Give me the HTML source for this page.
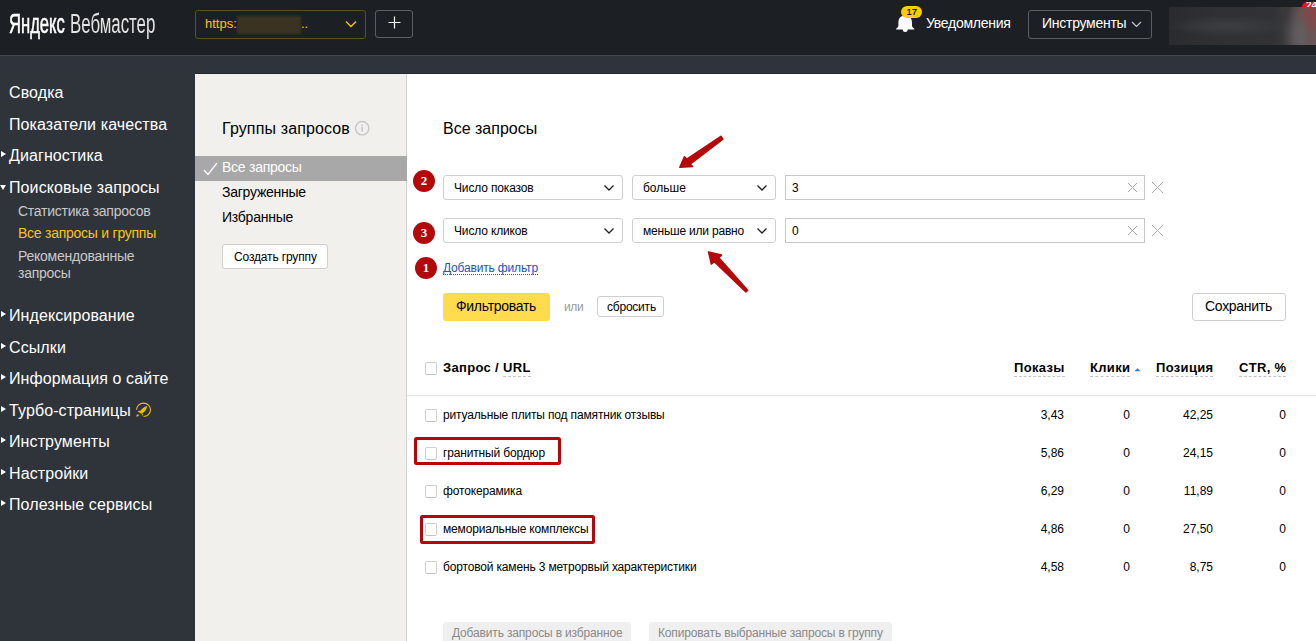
<!DOCTYPE html>
<html><head><meta charset="utf-8">
<style>
*{margin:0;padding:0;box-sizing:border-box}
html,body{width:1316px;height:641px;overflow:hidden;background:#2f333a;font-family:"Liberation Sans",sans-serif}
.a{position:absolute;white-space:nowrap;line-height:1}
#hdr{position:absolute;left:0;top:0;width:1316px;height:55px;background:#1c1f23}
#hline{position:absolute;left:0;top:55px;width:1316px;height:1px;background:#41454b}
#strip{position:absolute;left:0;top:56px;width:1316px;height:17px;background:#2f333b}
#sline{position:absolute;left:195px;top:73px;width:1121px;height:1px;background:#24272c}
#gpanel{position:absolute;left:195px;top:74px;width:211px;height:567px;background:#f1f0ed}
#gborder{position:absolute;left:406px;top:74px;width:1px;height:567px;background:#cfcfcf}
#main{position:absolute;left:407px;top:74px;width:909px;height:567px;background:#fff}
.nav{font-size:16px;color:#fff;letter-spacing:0.1px}
.sub{font-size:14px;color:#c9c9c9;letter-spacing:-0.25px}
.tri{position:absolute;width:0;height:0;border-top:3px solid transparent;border-bottom:3px solid transparent;border-left:5px solid #fff}
.trid{position:absolute;width:0;height:0;border-left:3px solid transparent;border-right:3px solid transparent;border-top:5px solid #fff}
.sel{position:absolute;height:25px;border:1px solid #d0d0d0;border-radius:3px;background:#fff}
.inp{position:absolute;height:25px;border:1px solid #c8c8c8;background:#fff}
.t13{font-size:12px;color:#000}
.t12{font-size:12px;color:#000;letter-spacing:-0.16px}
.badge{position:absolute;width:22px;height:22px;border-radius:50%;background:#b3090b;color:#fff;font-weight:bold;font-size:13px;text-align:center;line-height:22px;font-family:"Liberation Serif",serif}
.cb{position:absolute;width:12px;height:13px;border:1px solid #cfcfcf;border-bottom-color:#c2c2c2;border-radius:2px;background:#fff}
.num{position:absolute;font-size:12px;color:#000;line-height:1;text-align:right;white-space:nowrap}
.th{position:absolute;font-size:13px;font-weight:bold;color:#000;line-height:1;white-space:nowrap;letter-spacing:0.33px}
.dash{border-bottom:1px dashed #c4c4c4;padding-bottom:1px}
</style></head><body>
<div id="hdr"></div>
<div id="hline"></div>
<div id="strip"></div>
<div id="sline"></div>
<div id="gpanel"></div>
<div id="gborder"></div>
<div id="main"></div>

<!-- header -->
<div class="a" style="left:9px;top:11px;font-size:27px;color:#fff;-webkit-text-stroke:0.6px #fff;transform:scaleX(0.615);transform-origin:0 0">Яндекс</div>
<div class="a" style="left:70px;top:11px;font-size:27px;color:#e4e4e4;transform:scaleX(0.624);transform-origin:0 0">Вебмастер</div>
<div style="position:absolute;left:195px;top:10px;width:171px;height:29px;border:1px solid #5e5020;border-radius:3px"></div>
<div class="a" style="left:205px;top:17px;font-size:13px;color:#f6c800">https:</div>
<div style="position:absolute;left:237px;top:16px;width:64px;height:18px;background:#3a3322;filter:blur(1px)"></div>
<div class="a" style="left:301px;top:17px;font-size:13px;color:#f6c800">..</div>
<svg style="position:absolute;left:345px;top:20px" width="12" height="8"><path d="M1 1.5 L6 6.5 L11 1.5" stroke="#f6c800" stroke-width="1.4" fill="none"/></svg>
<div style="position:absolute;left:375px;top:10px;width:38px;height:28px;border:1px solid #5a5d62;border-radius:3px"></div>
<svg style="position:absolute;left:388px;top:16px" width="13" height="13"><path d="M6.5 0.5V12.5M0.5 6.5H12.5" stroke="#fff" stroke-width="1.2"/></svg>

<svg style="position:absolute;left:895px;top:13px" width="20" height="20" viewBox="0 0 20 20"><path d="M10.2 2.6 C5.5 2.6 3.4 5.5 3.4 10 L3.4 12.6 C3.4 14 2.4 14.9 1.2 15.6 L1.2 16.6 L19.2 16.6 L19.2 15.6 C18 14.9 17 14 17 12.6 L17 10 C17 5.5 14.9 2.6 10.2 2.6Z M7.6 16.4 L8.3 18.6 Q10.2 19.4 12.1 18.6 L12.8 16.4Z" fill="#fff"/></svg>
<div style="position:absolute;left:901px;top:6px;width:21px;height:12px;border-radius:6px;background:#fc0"></div><div class="a" style="left:906.5px;top:7px;font-size:9.5px;-webkit-text-stroke:0.2px #000;color:#000">17</div>
<div class="a" style="left:926px;top:16px;font-size:14px;letter-spacing:-0.27px;color:#fff">Уведомления</div>
<div style="position:absolute;left:1028px;top:10px;width:124px;height:29px;border:1px solid #5a5d62;border-radius:3px"></div>
<div class="a" style="left:1042px;top:16px;font-size:14px;letter-spacing:-0.27px;color:#fff">Инструменты</div>
<svg style="position:absolute;left:1131px;top:20.5px" width="11" height="7"><path d="M1 1 L5.5 5.5 L10 1" stroke="#ccc" stroke-width="1.1" fill="none"/></svg>
<div style="position:absolute;left:1169px;top:7px;width:147px;height:38px;background:radial-gradient(ellipse 22px 24px at 147px 4px,rgba(150,62,64,0.85),rgba(150,62,64,0)),radial-gradient(ellipse 14px 30px at 127px 28px,rgba(110,108,110,0.55),rgba(110,108,110,0)),radial-gradient(ellipse 62px 11px at 58px 19px,rgba(62,64,67,0.9),rgba(62,64,67,0)),linear-gradient(90deg,#2a2b2e 0%,#2e3033 30%,#303235 70%,#3e3b3e 82%,#5e5658 90%,#6a5456 100%)"></div>
<div style="position:absolute;left:1302px;top:2px;width:20px;height:5px;border-radius:5px 5px 0 0;background:#ee1111;overflow:hidden"><div style="position:absolute;left:4px;top:-1px;font-size:10px;font-weight:bold;color:#fff;line-height:10px;font-family:'Liberation Sans'">24</div></div>

<!-- sidebar -->
<div class="a nav" style="left:9px;top:85px">Сводка</div>
<div class="a nav" style="left:9px;top:117px">Показатели качества</div>
<div class="tri" style="left:1px;top:151px"></div>
<div class="a nav" style="left:9px;top:148px">Диагностика</div>
<div class="trid" style="left:0px;top:185px"></div>
<div class="a nav" style="left:9px;top:180px">Поисковые запросы</div>
<div class="a sub" style="left:18px;top:204px">Статистика запросов</div>
<div class="a sub" style="left:18px;top:226px;color:#f5c518">Все запросы и группы</div>
<div class="a sub" style="left:18px;top:249px">Рекомендованные</div>
<div class="a sub" style="left:18px;top:266px">запросы</div>
<div class="tri" style="left:1px;top:311px"></div>
<div class="a nav" style="left:9px;top:308px">Индексирование</div>
<div class="tri" style="left:1px;top:343px"></div>
<div class="a nav" style="left:9px;top:340px">Ссылки</div>
<div class="tri" style="left:1px;top:374px"></div>
<div class="a nav" style="left:9px;top:371px">Информация о сайте</div>
<div class="tri" style="left:1px;top:406px"></div>
<div class="a nav" style="left:9px;top:403px">Турбо-страницы</div>
<svg style="position:absolute;left:132px;top:400px" width="23" height="20" viewBox="0 0 23 20"><path d="M4.5 9.8 A7 6.7 0 1 1 11.5 16.5" stroke="#e8c000" stroke-width="1.1" fill="none"/><path d="M15.2 6 C12 6.6 9.2 9 7.6 12.3 L9.2 13.9 C12.5 12.4 14.8 9.4 15.2 6Z M8.6 10.4 L5.6 11.2 L7.3 12.7Z M10.4 13.3 L9.6 16.2 L11.3 14.6Z M4.2 16.6 C4.2 15.2 5 14.4 6.2 14.2 L7 15.2 C6.6 16.2 5.6 16.7 4.2 16.6Z" fill="#e8c000"/></svg>
<div class="tri" style="left:1px;top:437px"></div>
<div class="a nav" style="left:9px;top:434px">Инструменты</div>
<div class="tri" style="left:1px;top:469px"></div>
<div class="a nav" style="left:9px;top:466px">Настройки</div>
<div class="tri" style="left:1px;top:500px"></div>
<div class="a nav" style="left:9px;top:497px">Полезные сервисы</div>

<!-- grey panel -->
<div class="a" style="left:222px;top:121px;font-size:16px;letter-spacing:0.13px;color:#000">Группы запросов</div>
<svg style="position:absolute;left:354px;top:120px" width="17" height="17" viewBox="0 0 17 17"><circle cx="8.2" cy="8.2" r="6.7" stroke="#c6c6c6" stroke-width="1.4" fill="none"/><rect x="7.4" y="7" width="1.6" height="4.6" fill="#c6c6c6"/><rect x="7.4" y="4.6" width="1.6" height="1.5" fill="#c6c6c6"/></svg>
<div style="position:absolute;left:195px;top:156px;width:212px;height:25px;background:#a8a8a8"></div>
<svg style="position:absolute;left:203px;top:162px" width="15" height="14"><path d="M1 8 L5 12.5 L14 1" stroke="#fff" stroke-width="1.3" fill="none"/></svg>
<div class="a" style="left:222px;top:160px;font-size:14px;letter-spacing:-0.25px;color:#fff">Все запросы</div>
<div class="a" style="left:222px;top:185px;font-size:14px;letter-spacing:-0.25px;color:#000">Загруженные</div>
<div class="a" style="left:222px;top:210px;font-size:14px;letter-spacing:-0.25px;color:#000">Избранные</div>
<div style="position:absolute;left:222px;top:244px;width:106px;height:25px;border:1px solid #cfcfcf;border-radius:3px;background:#fff"></div>
<div class="a" style="left:234px;top:251px;font-size:12px;letter-spacing:-0.15px;color:#000">Создать группу</div>

<!-- main -->
<div class="a" style="left:443px;top:121px;font-size:16px;color:#000">Все запросы</div>

<div class="badge" style="left:413px;top:170px">2</div>
<div class="sel" style="left:443px;top:175px;width:180px"></div>
<div class="a t13" style="left:454px;top:182px;letter-spacing:-0.15px">Число показов</div>
<svg style="position:absolute;left:603px;top:184px" width="12" height="8"><path d="M1.5 1.5 L6 6 L10.5 1.5" stroke="#222" stroke-width="1.3" fill="none"/></svg>
<div class="sel" style="left:632px;top:175px;width:144px"></div>
<div class="a t13" style="left:643px;top:182px">больше</div>
<svg style="position:absolute;left:756px;top:184px" width="12" height="8"><path d="M1.5 1.5 L6 6 L10.5 1.5" stroke="#222" stroke-width="1.3" fill="none"/></svg>
<div class="inp" style="left:785px;top:175px;width:360px"></div>
<div class="a t13" style="left:792px;top:182px">3</div>
<svg style="position:absolute;left:1127px;top:182px" width="11" height="11"><path d="M1 1L10 10M10 1L1 10" stroke="#a8a8a8" stroke-width="1"/></svg>
<svg style="position:absolute;left:1151px;top:181px" width="13" height="13"><path d="M1 1L12 12M12 1L1 12" stroke="#b0b0b0" stroke-width="1"/></svg>

<div class="badge" style="left:413px;top:222px">3</div>
<div class="sel" style="left:443px;top:218px;width:180px"></div>
<div class="a t13" style="left:454px;top:225px;letter-spacing:-0.15px">Число кликов</div>
<svg style="position:absolute;left:603px;top:227px" width="12" height="8"><path d="M1.5 1.5 L6 6 L10.5 1.5" stroke="#222" stroke-width="1.3" fill="none"/></svg>
<div class="sel" style="left:632px;top:218px;width:144px"></div>
<div class="a t13" style="left:643px;top:225px;letter-spacing:-0.2px">меньше или равно</div>
<svg style="position:absolute;left:756px;top:227px" width="12" height="8"><path d="M1.5 1.5 L6 6 L10.5 1.5" stroke="#222" stroke-width="1.3" fill="none"/></svg>
<div class="inp" style="left:785px;top:218px;width:360px"></div>
<div class="a t13" style="left:792px;top:225px">0</div>
<svg style="position:absolute;left:1127px;top:225px" width="11" height="11"><path d="M1 1L10 10M10 1L1 10" stroke="#a8a8a8" stroke-width="1"/></svg>
<svg style="position:absolute;left:1151px;top:224px" width="13" height="13"><path d="M1 1L12 12M12 1L1 12" stroke="#b0b0b0" stroke-width="1"/></svg>

<div class="badge" style="left:415px;top:257px">1</div>
<div class="a t13" style="left:443px;top:262px;letter-spacing:-0.17px;color:#2152c4;border-bottom:1px dotted #2152c4;padding-bottom:0">Добавить фильтр</div>

<div style="position:absolute;left:443px;top:293px;width:107px;height:28px;background:#ffdb4d;border-radius:3px"></div>
<div class="a" style="left:456px;top:299px;font-size:14px;letter-spacing:-0.3px;color:#000">Фильтровать</div>
<div class="a" style="left:564px;top:301px;font-size:12px;letter-spacing:-0.4px;color:#999">или</div>
<div style="position:absolute;left:597px;top:296px;width:67px;height:21px;border:1px solid #cfcfcf;border-radius:3px;background:#fff"></div>
<div class="a" style="left:607px;top:301px;font-size:12px;letter-spacing:-0.22px;color:#000">сбросить</div>
<div style="position:absolute;left:1192px;top:293px;width:94px;height:28px;border:1px solid #cfcfcf;border-radius:3px;background:#fff"></div>
<div class="a" style="left:1205px;top:299px;font-size:14px;letter-spacing:-0.3px;color:#000">Сохранить</div>

<!-- arrows -->
<svg style="position:absolute;left:0;top:0" width="1316" height="641">
<polygon points="720.9,136.3 686.8,159.1 684.4,156.7 679.8,167.2 692.5,166.5 690.2,164.1 722.9,139.1" fill="#b50a0a" stroke="#b50a0a" stroke-width="1.5" stroke-linejoin="round"/>
<polygon points="747.7,290.2 718.6,257.6 721.5,255.1 708.6,252 711.3,264.1 714.3,261.7 745.9,291.9" fill="#b50a0a" stroke="#b50a0a" stroke-width="1.5" stroke-linejoin="round"/>
</svg>

<!-- table -->
<div class="cb" style="left:425px;top:362px"></div>
<div class="th" style="left:443px;top:361px">Запрос / <span class="dash">URL</span></div>
<div class="th" style="left:1014px;top:361px"><span class="dash">Показы</span></div>
<div class="th" style="left:1090px;top:361px"><span class="dash">Клики</span></div>
<svg style="position:absolute;left:1134px;top:368px" width="8" height="4"><path d="M0.3 3.3 L3.5 0.3 L6.7 3.3Z" fill="#2a80f5"/></svg>
<div class="th" style="left:1156px;top:361px"><span class="dash">Позиция</span></div>
<div class="th" style="left:1239px;top:361px"><span class="dash">CTR, %</span></div>
<div style="position:absolute;left:407px;top:395px;width:909px;height:1px;background:#e6e6e6"></div>

<div class="cb" style="left:425px;top:409px"></div>
<div class="a t12" style="left:443px;top:409px">ритуальные плиты под памятник отзывы</div>
<div class="num" style="right:252px;top:409px">3,43</div>
<div class="num" style="right:186px;top:409px">0</div>
<div class="num" style="right:103px;top:409px">42,25</div>
<div class="num" style="right:30px;top:409px">0</div>

<div class="cb" style="left:425px;top:447px"></div>
<div class="a t12" style="left:443px;top:447px">гранитный бордюр</div>
<div class="num" style="right:252px;top:447px">5,86</div>
<div class="num" style="right:186px;top:447px">0</div>
<div class="num" style="right:103px;top:447px">24,15</div>
<div class="num" style="right:30px;top:447px">0</div>

<div class="cb" style="left:425px;top:485px"></div>
<div class="a t12" style="left:443px;top:485px">фотокерамика</div>
<div class="num" style="right:252px;top:485px">6,29</div>
<div class="num" style="right:186px;top:485px">0</div>
<div class="num" style="right:103px;top:485px">11,89</div>
<div class="num" style="right:30px;top:485px">0</div>

<div class="cb" style="left:425px;top:523px"></div>
<div class="a t12" style="left:443px;top:523px">мемориальные комплексы</div>
<div class="num" style="right:252px;top:523px">4,86</div>
<div class="num" style="right:186px;top:523px">0</div>
<div class="num" style="right:103px;top:523px">27,50</div>
<div class="num" style="right:30px;top:523px">0</div>

<div class="cb" style="left:425px;top:561px"></div>
<div class="a t12" style="left:443px;top:561px">бортовой камень 3 метрорвый характеристики</div>
<div class="num" style="right:252px;top:561px">4,58</div>
<div class="num" style="right:186px;top:561px">0</div>
<div class="num" style="right:103px;top:561px">8,75</div>
<div class="num" style="right:30px;top:561px">0</div>

<div style="position:absolute;left:414.3px;top:437px;width:146.5px;height:28.3px;border:3.4px solid #b8050a;border-radius:2.5px"></div>
<div style="position:absolute;left:419.5px;top:514.5px;width:175px;height:29.8px;border:3.4px solid #b8050a;border-radius:2.5px"></div>

<div style="position:absolute;left:443px;top:622px;width:188px;height:25px;background:#efefef;border-radius:3px"></div>
<div class="a" style="left:452px;top:627px;font-size:12px;letter-spacing:-0.16px;color:#8a8a8a">Добавить запросы в избранное</div>
<div style="position:absolute;left:649px;top:622px;width:243px;height:25px;background:#efefef;border-radius:3px"></div>
<div class="a" style="left:658px;top:627px;font-size:12px;letter-spacing:-0.16px;color:#8a8a8a">Копировать выбранные запросы в группу</div>
</body></html>
